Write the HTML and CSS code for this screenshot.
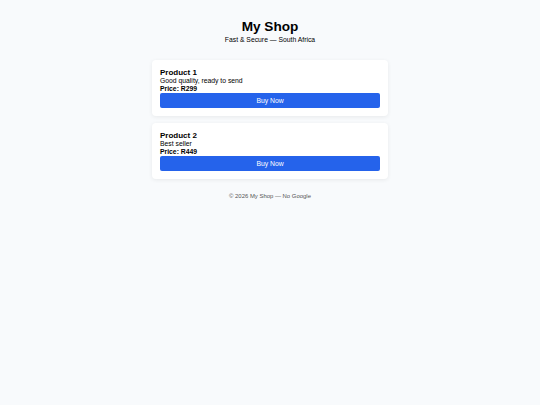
FILE: index.html
```html
<!DOCTYPE html>
<html>
<head>
<meta charset="utf-8">
<link rel="stylesheet" href="styles.css">
</head>
<body>
<header class="header">
  <h1 class="title">My Shop</h1>
  <p class="tagline">Fast &amp; Secure — South Africa</p>
</header>
<main class="products">
  <div class="card">
    <h3 class="name">Product 1</h3>
    <p class="desc">Good quality, ready to send</p>
    <p class="price">Price: R299</p>
    <button class="buy">Buy Now</button>
  </div>
  <div class="card">
    <h3 class="name">Product 2</h3>
    <p class="desc">Best seller</p>
    <p class="price">Price: R449</p>
    <button class="buy">Buy Now</button>
  </div>
</main>
<footer class="footer">© 2026 My Shop — No Google</footer>
</body>
</html>
```
FILE: styles.css
```css
html, body {
  margin: 0;
  padding: 0;
  background: #f8fafc;
  font-family: "Liberation Sans", Arial, sans-serif;
  color: #000;
}
body {
  display: flex;
  flex-direction: column;
  align-items: center;
}
.header {
  text-align: center;
  padding-top: 18px;
}
.title {
  margin: 0;
  font-size: 13.6px;
  line-height: 17px;
  font-weight: bold;
}
.tagline {
  margin: 0;
  font-size: 6.8px;
  line-height: 9px;
}
.products {
  width: 236px;
  margin-top: 16px;
  display: flex;
  flex-direction: column;
  gap: 7px;
}
.card {
  background: #fff;
  border-radius: 4px;
  box-shadow: 0 1px 4px rgba(0,0,0,0.07);
  padding: 8px;
  display: flex;
  flex-direction: column;
}
.name {
  margin: 0;
  font-size: 8px;
  line-height: 9px;
  font-weight: bold;
}
.desc {
  margin: 0;
  font-size: 6.8px;
  line-height: 8px;
}
.price {
  margin: 0;
  font-size: 6.8px;
  line-height: 8px;
  font-weight: bold;
}
.buy {
  height: 15px;
  border: none;
  border-radius: 2px;
  background: #2563eb;
  color: #fff;
  font-family: "Liberation Sans", Arial, sans-serif;
  font-size: 6.8px;
  padding: 0;
}
.footer {
  margin-top: 13px;
  font-size: 5.95px;
  line-height: 8px;
  color: #555;
}
```
